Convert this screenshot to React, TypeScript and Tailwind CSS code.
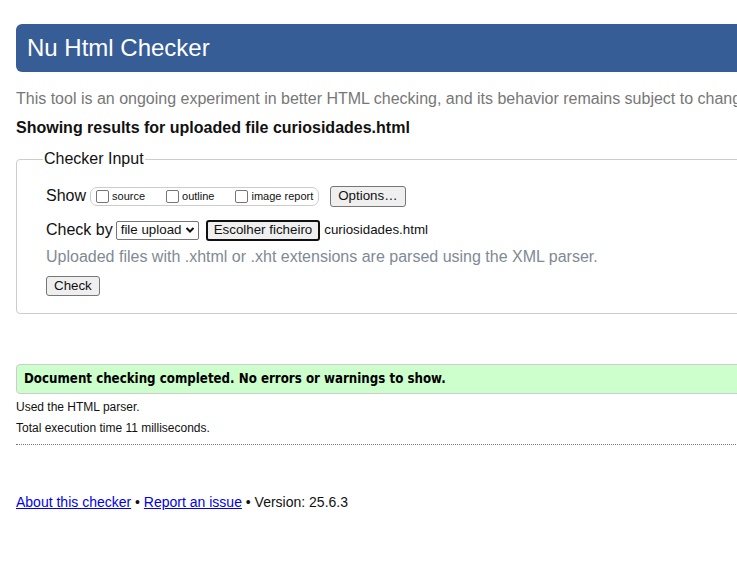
import React from "react";

function Checkbox() {
  return (
    <span className="inline-block w-[13px] h-[13px] border border-[#767676] rounded-[2px] bg-white mr-[3px] ml-[5px] align-middle" />
  );
}

export default function App() {
  return (
    <div className="w-full overflow-hidden bg-white font-['Liberation_Sans',Arial,sans-serif] text-[#111]">
      <div className="w-[940px] pl-4 pt-6 pb-16">
        <div className="h-12 bg-[#365d95] rounded-[6px] flex items-center pl-[11px]">
          <h1 className="text-white text-[24px] leading-none">Nu Html Checker</h1>
        </div>

        <p className="mt-[17px] text-[16px] leading-5 text-[#777] whitespace-nowrap">
          This tool is an ongoing experiment in better HTML checking, and its behavior remains subject to change
        </p>
        <p className="mt-[9px] text-[16px] leading-5 font-bold whitespace-nowrap">
          Showing results for uploaded file curiosidades.html
        </p>

        <fieldset className="mt-3 border border-[#ccc] rounded-[4px] pl-[29px] pb-4 w-[900px]">
          <legend className="ml-[-3px] px-[1px] text-[16px] leading-[18px]">Checker Input</legend>

          <div className="mt-4 h-6 flex items-center text-[16px]">
            <span className="mr-[4px]">Show</span>
            <div className="h-[19px] flex items-center border border-[#ccc] rounded-[7px] pr-[5px] text-[11px]">
              <label className="flex items-center">
                <Checkbox />
                <span>source</span>
              </label>
              <label className="flex items-center ml-[16px]">
                <Checkbox />
                <span>outline</span>
              </label>
              <label className="flex items-center ml-[16px]">
                <Checkbox />
                <span>image report</span>
              </label>
            </div>
            <button className="ml-[11px] h-[21px] px-[7px] bg-[#efefef] border border-[#767676] rounded-[3px] text-[13.33px] leading-none">
              Options…
            </button>
          </div>

          <div className="mt-[10px] h-6 flex items-center text-[16px]">
            <span className="mr-[3px]">Check by</span>
            <div className="h-[19px] w-[83px] flex items-center justify-between border border-[#767676] rounded-[2px] pl-[4px] pr-[3px] text-[13.33px]">
              <span>file upload</span>
              <svg width="10" height="8" viewBox="0 0 10 8">
                <path d="M1.5 2 L5 5.5 L8.5 2" stroke="#111" strokeWidth="2" fill="none" />
              </svg>
            </div>
            <button className="ml-[7px] h-[21px] px-[6px] bg-[#efefef] border-2 border-[#101010] rounded-[3px] text-[13.33px] leading-none">
              Escolher ficheiro
            </button>
            <span className="ml-[4px] text-[13.33px]">curiosidades.html</span>
          </div>

          <p className="mt-[5px] text-[16px] leading-5 text-[#808a94]">
            Uploaded files with .xhtml or .xht extensions are parsed using the XML parser.
          </p>

          <button className="mt-[9px] h-[20px] px-[7px] bg-[#efefef] border border-[#767676] rounded-[3px] text-[13.33px] leading-none">
            Check
          </button>
        </fieldset>

        <div className="mt-[50px] h-[30px] flex items-center bg-[#ccffcc] border border-[#ccc] rounded-l-[4px] pl-[7px] font-['DejaVu_Sans_Condensed','DejaVu_Sans',sans-serif] font-bold text-[13.2px] text-black">
          Document checking completed. No errors or warnings to show.
        </div>

        <p className="mt-[5px] text-[12px] leading-4">Used the HTML parser.</p>
        <p className="mt-[5px] text-[12px] leading-4">Total execution time 11 milliseconds.</p>

        <div className="mt-[8px] border-t border-dotted border-[#777]" />

        <p className="mt-[48px] text-[14px] leading-[18px]">
          <a href="#" className="text-[#0000ee] underline">About this checker</a>
          {" • "}
          <a href="#" className="text-[#0000ee] underline">Report an issue</a>
          {" • Version: 25.6.3"}
        </p>
      </div>
    </div>
  );
}
